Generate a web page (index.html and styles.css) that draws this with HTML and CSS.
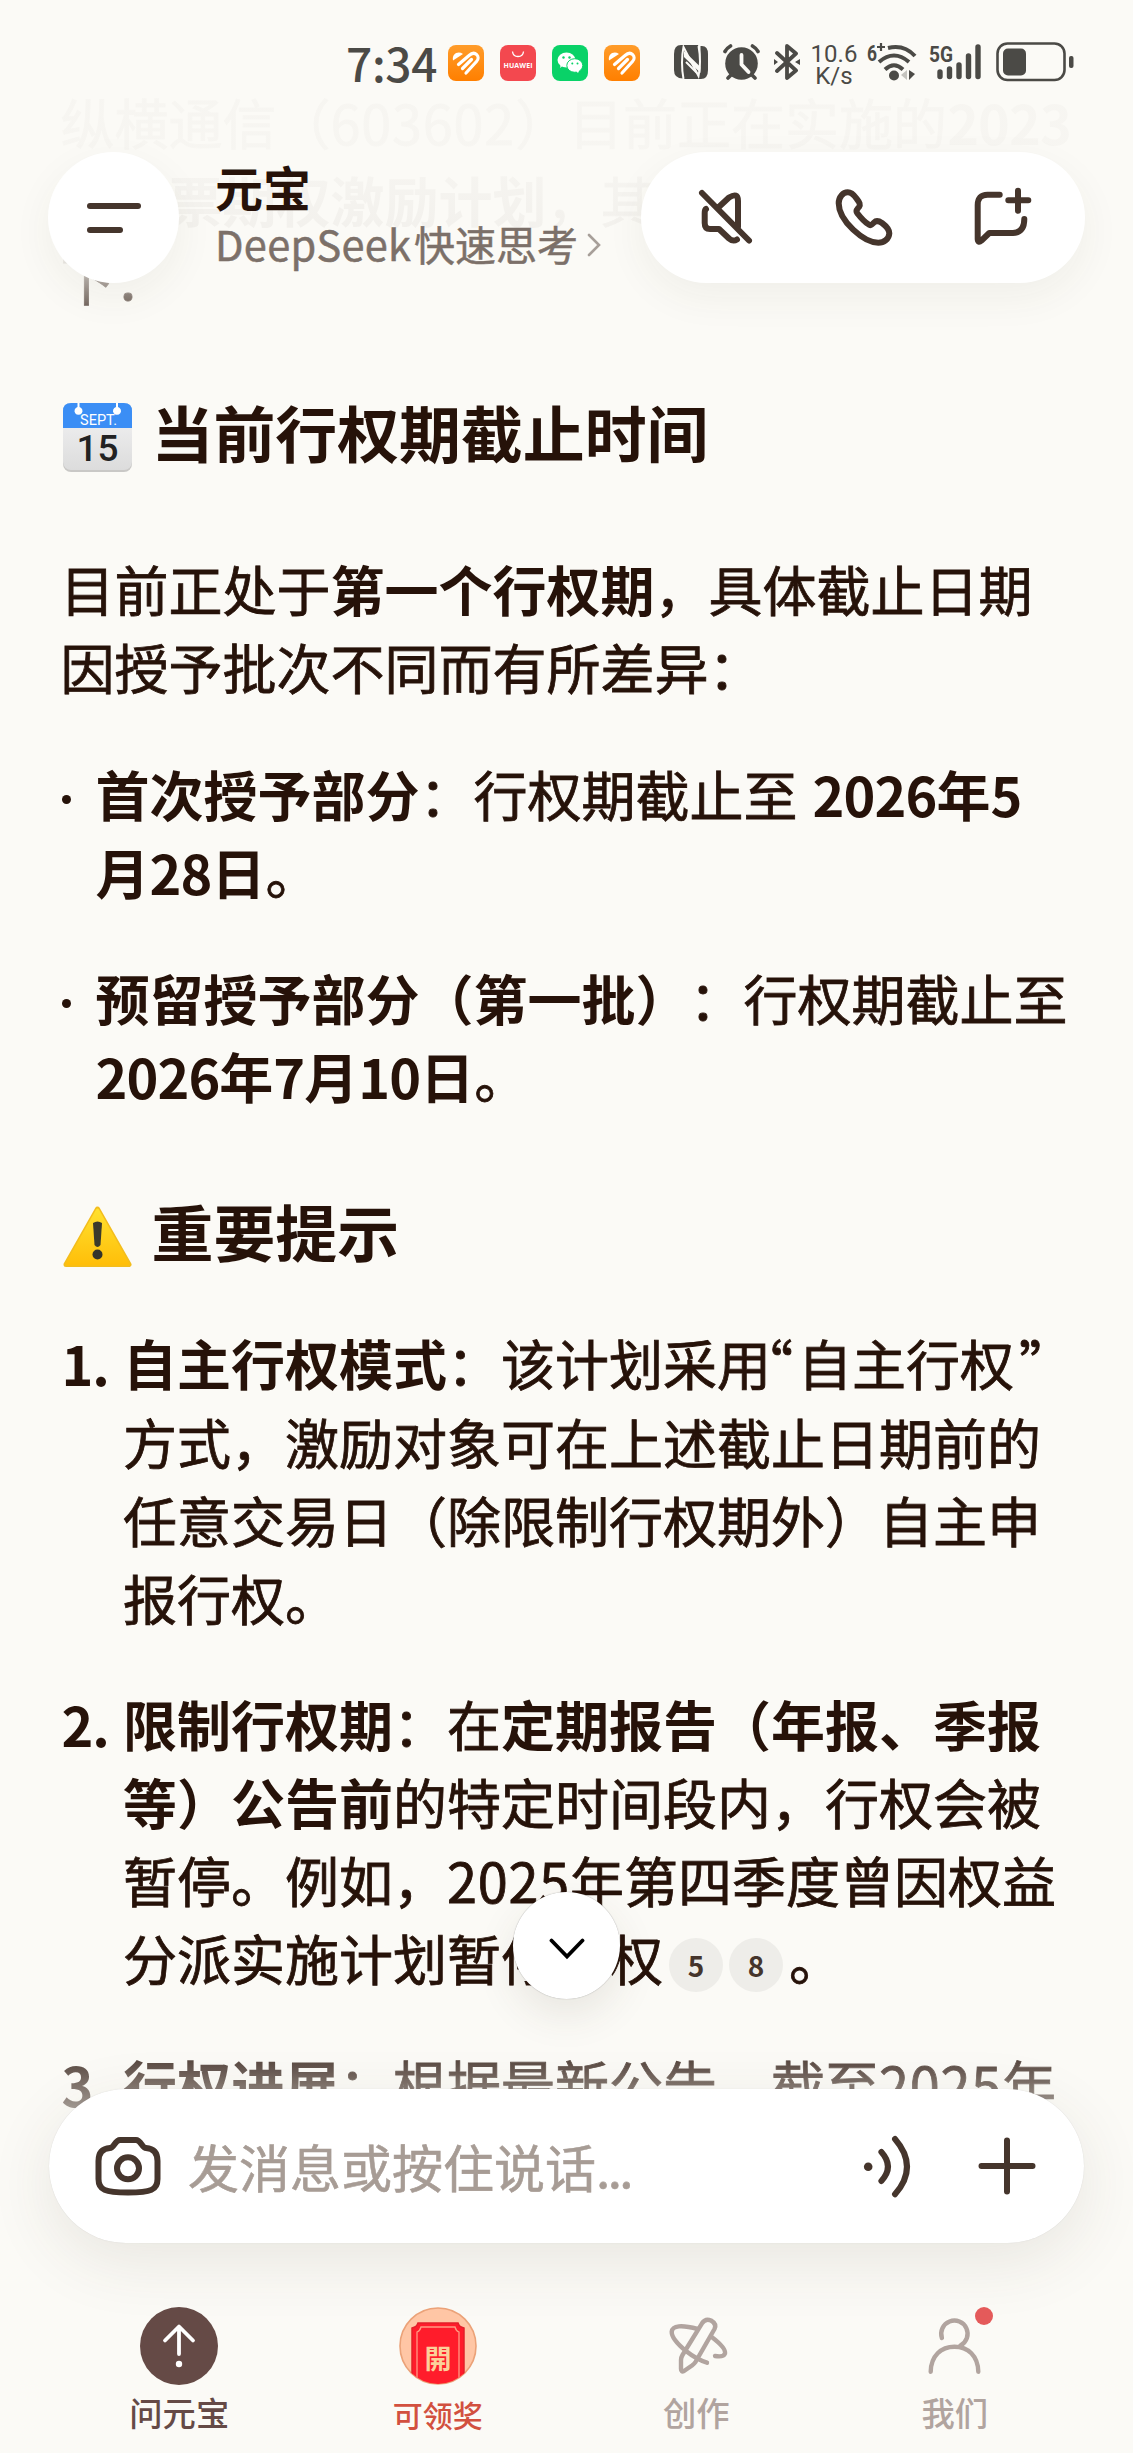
FILE: index.html
```html
<!DOCTYPE html>
<html lang="zh-CN">
<head>
    <meta charset="UTF-8">
    <meta name="viewport" content="width=device-width, initial-scale=1.0">
    <title>元宝</title>
    <link rel="stylesheet" href="styles.css">
</head>
<body>

<div class="screen">

    <!-- 对话内容 -->
    <main class="chat">
        <p class="intro">纵横通信（<span class="num">603602</span>）目前正在实施的<b class="num">2023</b><br><b>年股票期权激励计划</b>，其<br>下：</p>

        <h2>
            <svg class="emoji" viewBox="0 0 69 69">
                <defs>
                    <linearGradient id="paper" x1="0" y1="0" x2="0" y2="1">
                        <stop offset="0" stop-color="#f4f4f5"/>
                        <stop offset="1" stop-color="#dcdcdc"/>
                    </linearGradient>
                </defs>
                <rect width="69" height="69" rx="8" fill="#c9c8c6"/>
                <rect width="69" height="67" rx="8" fill="url(#paper)"/>
                <path d="M0 25V8Q0 0 8 0H61Q69 0 69 8V25Z" fill="#3b8ef5"/>
                <path d="M14.5 0H16.5V4A4 4 0 1 1 14.5 4ZM53 0H55V4A4 4 0 1 1 53 4Z" fill="#fff"/>
                <text x="35.5" y="22" class="cal-month">SEPT.</text>
                <text x="34.5" y="58" class="cal-day">15</text>
            </svg>
            <span>当前行权期截止时间</span>
        </h2>

        <p class="lead">目前正处于<b>第一个行权期</b>，具体截止日期<br>因授予批次不同而有所差异：</p>

        <ul>
            <li><span><b>首次授予部分</b>：行权期截止至 <b class="date"><span class="num">2026</span>年5</b><br><b>月<span class="num">28</span>日</b>。</span></li>
            <li><span><b>预留授予部分（第一批）</b>：行权期截止至<br><b><span class="num">2026</span>年<span class="num">7</span>月<span class="num">10</span>日</b>。</span></li>
        </ul>

        <h2 class="tips">
            <svg class="emoji warn" viewBox="0 0 69 62">
                <defs>
                    <linearGradient id="sign" x1="0" y1="0" x2="0" y2="1">
                        <stop offset="0" stop-color="#ffe02e"/>
                        <stop offset="1" stop-color="#ffbf0a"/>
                    </linearGradient>
                </defs>
                <path d="M34.5 3L66 58.5H3Z" fill="url(#sign)" stroke="#f3bd1c" stroke-width="5" stroke-linejoin="round"/>
                <path d="M34.5 4L65 58H4Z" fill="url(#sign)" stroke="url(#sign)" stroke-width="3" stroke-linejoin="round"/>
                <path d="M30 17Q34.5 14 39 17L37.5 39Q34.5 43 31.5 39Z" fill="#3a3a2c"/>
                <circle cx="34.5" cy="48.5" r="5" fill="#33332c"/>
            </svg>
            <span>重要提示</span>
        </h2>

        <ol>
            <li><b class="no">1.</b><span><b>自主行权模式</b>：该计划采用<i class="quote open-quote">“</i>自主行权<i class="quote close-quote">”</i><br>方式，激励对象可在上述截止日期前的<br>任意交易日（除限制行权期外）自主申<br>报行权。</span></li>
            <li><b class="no">2.</b><span><b>限制行权期</b>：在<b>定期报告（年报、季报</b><br><b>等）公告前</b>的特定时间段内，行权会被<br>暂停。例如，<span class="num">2025</span>年第四季度曾因权益<br>分派实施计划暂停行权<span class="ref">5</span><span class="ref">8</span><span class="stop">。</span></span></li>
            <li><b class="no">3.</b><span><b>行权进展</b>：根据最新公告，截至<span class="num">2025</span>年</span></li>
        </ol>
    </main>

    <!-- 顶部 -->
    <header class="top">
        <div class="status">
            <span class="time">7:34</span>
            <div class="apps">
                <svg viewBox="0 0 36 36">
                    <defs>
                        <linearGradient id="orange" x1="0" y1="0" x2="0" y2="1">
                            <stop offset="0" stop-color="#ff9c2a"/>
                            <stop offset="1" stop-color="#ff7f00"/>
                        </linearGradient>
                    </defs>
                    <rect width="36" height="36" rx="8" fill="url(#orange)"/>
                    <path d="M5 15.500C3.500 9 10 5.500 15 9Z" fill="#fff"/>
                    <path d="M10.500 19.500L21 10.500C27 5 33 11.500 28.500 16.500L18 28M14.500 23.500L23.500 14.500" fill="none" stroke="#fff" stroke-width="3.200" stroke-linecap="round"/>
                </svg>
                <svg viewBox="0 0 36 36">
                    <rect width="36" height="36" rx="8" fill="#f3484f"/>
                    <path d="M12.500 6.500Q13 11.500 18 11.500T23.500 6.500" fill="none" stroke="#fff" stroke-width="1.300"/>
                    <text x="18" y="23" class="brand" textLength="29">HUAWEI</text>
                </svg>
                <svg viewBox="0 0 36 36">
                    <rect width="36" height="36" rx="8" fill="#09d268"/>
                    <path d="M8 23L9 19H13Z" fill="#fff"/>
                    <ellipse cx="14.500" cy="15" rx="9" ry="7.500" fill="#fff"/>
                    <ellipse cx="22.800" cy="20.500" rx="8" ry="6.800" fill="#fff" stroke="#09d268"/>
                    <path d="M26 28L28 24L24 26Z" fill="#fff"/>
                    <g fill="#09d268">
                        <circle cx="11.500" cy="12.500" r="1.200"/><circle cx="17.500" cy="12.500" r="1.200"/>
                        <circle cx="20.300" cy="18.500" r="1"/><circle cx="25.500" cy="18.500" r="1"/>
                    </g>
                </svg>
                <svg viewBox="0 0 36 36">
                    <rect width="36" height="36" rx="8" fill="url(#orange)"/>
                    <path d="M5 15.500C3.500 9 10 5.500 15 9Z" fill="#fff"/>
                    <path d="M10.500 19.500L21 10.500C27 5 33 11.500 28.500 16.500L18 28M14.500 23.500L23.500 14.500" fill="none" stroke="#fff" stroke-width="3.200" stroke-linecap="round"/>
                </svg>
            </div>
            <div class="indicators">
                <!-- NFC -->
                <svg class="nfc" viewBox="0 0 34 34">
                    <path d="M7 0H24Q26 6 26.500 22L10 6V33.500Q0 34 0 25V9Q0 0 7 0Z" fill="#4b4a46"/>
                    <path d="M27 34H10L10 12L26.500 28V1Q34 0 34 9V25Q34 34 27 34Z" fill="#4b4a46"/>
                    <path d="M9.500 34Q6.500 17 9.500 2L24.500 31Q27.500 17 24.500 1" fill="none" stroke="#fbfaf6" stroke-width="2"/>
                    <path d="M12 10L23 21M12 17L23 28" stroke="#fbfaf6" stroke-width="2"/>
                </svg>
                <svg class="alarm" viewBox="0 0 37 36">
                    <circle cx="18.500" cy="19.500" r="16.300" fill="#4b4a46"/>
                    <path d="M2 7.500Q4 4 7.500 2M35 7.500Q33 4 29.500 2M5 34L9 30M32 34L28 30" stroke="#4b4a46" stroke-width="3.600" stroke-linecap="round" fill="none"/>
                    <path d="M18.500 11V20.500L25.500 28" stroke="#fbfaf6" stroke-width="3.800" stroke-linecap="round" stroke-linejoin="round" fill="none"/>
                </svg>
                <svg class="bt" viewBox="0 0 26 36">
                    <path d="M3 9L22 26.500L13 34V2L22 9.500L3 27" fill="none" stroke="#4b4a46" stroke-width="3.800" stroke-linecap="round" stroke-linejoin="round"/>
                    <path d="M0 15L4 18L0 21ZM26 15L21 18L26 21Z" fill="#4b4a46"/>
                </svg>
                <div class="speed"><span>10.6</span><span>K/s</span></div>
                <svg class="wifi" viewBox="0 0 50 40">
                    <text x="0" y="18.500" class="gen" textLength="10" lengthAdjust="spacingAndGlyphs">6</text>
                    <path d="M10 5H18M14 1V9" stroke="#4b4a46" stroke-width="2.200"/>
                    <g fill="none" stroke="#4b4a46" stroke-width="4" stroke-linecap="butt">
                        <path d="M21 6Q37 2 48 14M12 20Q27 7 42 20M18 27.500Q27 19 36 27.500"/>
                    </g>
                    <circle cx="27" cy="33.500" r="5" fill="#4b4a46"/>
                    <path d="M40 28V38L34 33Z" fill="#c4c3be"/>
                    <path d="M42 28V38L48 32Z" fill="#4b4a46"/>
                </svg>
                <svg class="signal" viewBox="0 0 54 38">
                    <text x="0" y="19" class="gen" textLength="24" lengthAdjust="spacingAndGlyphs">5G</text>
                    <path d="M11 29V33.500M20.500 26V33.500M30 22V33.500M39.500 13V33.500M49 4V33.500" stroke="#4b4a46" stroke-width="5.400" stroke-linecap="round"/>
                </svg>
                <svg class="battery" viewBox="0 0 78 40">
                    <rect x="1.500" y="1.500" width="67" height="36.500" rx="10" fill="none" stroke="#4b4a46" stroke-width="2.600"/>
                    <rect x="7" y="6.500" width="23" height="27" rx="5" fill="#4b4a46"/>
                    <rect x="73" y="14" width="4.500" height="12" rx="2" fill="#4b4a46"/>
                </svg>
            </div>
        </div>

        <div class="nav">
            <div class="menu"><i></i><i></i></div>
            <div class="title">
                <h1>元宝</h1>
                <p><span class="model">DeepSeek</span><span>快速思考</span>
                    <svg viewBox="0 0 14 24"><path d="M2 2L12 12L2 22" fill="none" stroke="#a79f99" stroke-width="2.600" stroke-linecap="round"/></svg>
                </p>
            </div>
            <div class="actions">
                <svg viewBox="0 0 60 60"><path d="M6 6L53 53.500M22 20.700L33 10.500Q42 5 42 14V40M10 22Q8.700 23 8.700 26V36Q8.700 42 14 42H23L33 51.500Q37 55 41 52.500"/></svg>
                <svg viewBox="0 0 60 60"><path d="M13.700 5.300C17 5.300 20 8 22.500 11.500C25 15 27 17 25 20C23 22.500 21 23.500 23.500 26.500C27 31 30 34.500 34 37C36.500 39.500 38 37.500 40 35.500C42 33.500 45 34 48 36C52 39 55.300 42 55.300 46.300C55 52 50 55.700 44.300 55.700C30 55.700 4.700 34 4.700 16.300C4.700 10 9 5.300 13.700 5.300Z"/></svg>
                <svg viewBox="0 0 60 60"><path d="M27.700 7.700H15.500Q5.700 7.700 5.700 18V52Q6 56.500 9.500 53.500L17.300 46H41Q52.300 45.500 52.300 32M46 3.700V23.700M36.300 13.300H56.300"/></svg>
            </div>
        </div>
    </header>

    <!-- 回到底部 -->
    <div class="scroll-down">
        <svg viewBox="0 0 36 22"><path d="M2.500 2.500L18 18.500L33.500 2.500" fill="none" stroke="#000" stroke-width="3.800" stroke-linecap="round"/></svg>
    </div>

    <!-- 底部 -->
    <footer class="bottom">
        <div class="composer">
            <svg class="camera" viewBox="0 0 66 59"><path d="M25 3H41C46 3 47 11 51 11C58 11.500 62.500 15 62.500 24V42C62.500 53 56 55.500 33 55.500S3.500 53 3.500 42V24C3.500 15 8 11.500 15 11C19 11 20 3 25 3Z"/><circle cx="33" cy="31.300" r="11"/></svg>
            <span class="placeholder">发消息或按住说话<span class="dots">...</span></span>
            <svg class="voice" viewBox="0 0 52 67"><circle class="dot" cx="8.200" cy="33.700" r="4.300"/><path d="M21.400 19Q34.500 33.700 21.400 48M35 6Q59 33.700 35 61.300"/></svg>
            <svg class="plus" viewBox="0 0 58 58"><path d="M29 3.500V54.500M3.500 29H54.500"/></svg>
        </div>

        <nav class="tabs">
            <div class="tab active">
                <svg viewBox="0 0 78 78">
                    <circle cx="39" cy="39" r="39" fill="#654a46"/>
                    <path d="M25 33.500L39 19.500L53 33.500M39 20V47" fill="none" stroke="#fff" stroke-width="3.800" stroke-linecap="round" stroke-linejoin="round"/>
                    <circle cx="39" cy="57" r="3.200" fill="#fff"/>
                </svg>
                <span>问元宝</span>
            </div>
            <div class="tab prize">
                <svg viewBox="0 0 78 78">
                    <defs><clipPath id="coin"><circle cx="39" cy="39" r="38"/></clipPath></defs>
                    <circle cx="39" cy="39" r="38" fill="#ffc6a5" stroke="#eba278" stroke-width="1.600"/>
                    <g clip-path="url(#coin)">
                        <path d="M19 16H59Q60 20 65 21V80H13V21Q18 20 19 16Z" fill="#ff1c2b" stroke="#e2202a" stroke-width="1.500"/>
                        <path d="M22 20H56Q57 24 60 25V78H18V25Q21 24 22 20Z" fill="none" stroke="#ff9a83" stroke-width="1.300"/>
                    </g>
                    <text x="39" y="62" class="open">開</text>
                </svg>
                <span>可领奖</span>
            </div>
            <div class="tab">
                <svg class="line" viewBox="-9 -7 78 78"><path d="M36 9.300Q39.500 4 45 6.500Q51 10 48.500 15L29.500 48Q28 50 26 51.500L18 57Q15 58.500 15 55V46Q15 43.500 16.500 41L36 9.300M31.700 15Q7 8.500 5.700 17.700Q5.500 25 20 37Q30 45 41 48.700M46 23.300Q60 34 59 39.500Q57.500 43.500 49 42"/></svg>
                <span>创作</span>
            </div>
            <div class="tab">
                <svg class="line" viewBox="-9 -7 78 78"><path d="M16.900 24A13.200 13.200 0 1 1 35.500 31.500M5.700 57.700C6 42 16 32.700 29.500 32.700S53 42 53.300 57.700"/></svg>
                <span>我们</span>
                <i class="badge"></i>
            </div>
        </nav>
    </footer>

</div>

</body>
</html>
```
FILE: styles.css
```css
/* 全局 */
* {
    box-sizing: border-box;
}

body {
    margin: 0;
    background-color: #fbfaf6;
    color: #261209;
    font-family: 'Noto Sans CJK SC', 'Noto Sans', sans-serif;
    text-spacing-trim: space-all;
}

h1, h2, p, ul, ol {
    margin: 0;
    padding: 0;
}

svg {
    display: block;
    flex: none;
}

.screen {
    position: relative;
    width: 1133px;
    height: 2453px;
    overflow: hidden;
}

/* 对话内容 */
.chat {
    padding: 83px 0 0 60.5px;
    font-size: 54px;
    line-height: 78.2px;
    white-space: nowrap;
    -webkit-text-stroke: 0.8px;
}

.chat b,
.chat h2 {
    -webkit-text-stroke: 0;
}

.num {
    letter-spacing: 0.8px;
}

b.num,
b .num {
    letter-spacing: -0.9px;
}

.date {
    margin-left: 3px;
}

.chat h2 {
    display: flex;
    gap: 20px;
    margin: 71px 0 77px 2px;
    font-size: 61.9px;
    line-height: 84px;
}

.emoji {
    width: 69px;
    height: 69px;
    margin-top: 14px;
}

.emoji.warn {
    height: 62px;
    margin-top: 18px;
}

.cal-month {
    font: 14.5px Roboto, sans-serif;
    fill: #fff;
    text-anchor: middle;
}

.cal-day {
    font: 500 37px Roboto, sans-serif;
    fill: #222;
    text-anchor: middle;
}

.chat ul {
    margin-top: 49px;
}

.chat li {
    display: flex;
    margin-bottom: 47.5px;
}

ul li::before {
    content: '';
    width: 9px;
    height: 9px;
    margin: 40px 25px 0 1px;
    border-radius: 50%;
    background-color: #261209;
}

.chat h2.tips {
    margin: 73px 0 52px 2px;
}

.no {
    width: 62.5px;
    padding-left: 1px;
    letter-spacing: -1px;
}

.quote {
    font-style: normal;
    font-feature-settings: 'halt';
}

.open-quote {
    margin: 0 5px 0 -5px;
}

.close-quote {
    margin-left: 5px;
}

.ref {
    display: inline-flex;
    align-items: center;
    justify-content: center;
    width: 54px;
    height: 54px;
    margin-left: 6px;
    border-radius: 50%;
    background-color: #eeede9;
    color: #45352c;
    font-size: 28px;
    font-weight: bold;
    line-height: 1;
    vertical-align: 4px;
    -webkit-text-stroke: 0;
}

.stop {
    margin-left: 6px;
}

/* 顶部 */
.top {
    position: absolute;
    top: 0;
    left: 0;
    width: 100%;
    height: 345px;
    background: linear-gradient(rgba(251, 250, 246, 0.98) 150px, rgba(251, 250, 246, 0.96) 230px, rgba(251, 250, 246, 0.92) 262px, rgba(251, 250, 246, 0.65) 280px, rgba(251, 250, 246, 0.4) 303px, rgba(251, 250, 246, 0) 340px);
}

.status {
    display: flex;
    height: 152px;
    padding: 45px 0 0 346px;
    color: #4b4a46;
}

.time {
    width: 102px;
    font-size: 46px;
    font-weight: 500;
    line-height: 35px;
    letter-spacing: -0.3px;
}

.apps {
    display: flex;
    gap: 16px;
}

.apps svg {
    width: 36px;
    height: 36px;
}

.brand {
    font: bold 7px 'Open Sans', sans-serif;
    fill: #fff;
    text-anchor: middle;
}

.indicators {
    display: flex;
    margin-left: 34px;
}

.nfc {
    width: 34px;
    height: 34px;
}

.alarm {
    width: 37px;
    height: 36px;
    margin: -1px 0 0 15px;
}

.bt {
    width: 26px;
    height: 36px;
    margin: -1px 0 0 14px;
}

.speed {
    display: flex;
    flex-direction: column;
    align-items: center;
    width: 52px;
    margin: -2px 0 0 8px;
    font-family: Roboto, sans-serif;
    font-size: 24px;
    line-height: 22px;
}

.wifi {
    width: 50px;
    height: 40px;
    margin: -3px 0 0 7px;
}

.signal {
    width: 54px;
    height: 38px;
    margin: -2px 0 0 12px;
}

.battery {
    width: 78px;
    height: 40px;
    margin: -3px 0 0 13px;
}

.gen {
    font: bold 22px Roboto, sans-serif;
    fill: #4b4a46;
}

.nav {
    display: flex;
    height: 131px;
    padding: 0 48px;
}

.menu {
    display: flex;
    flex-direction: column;
    gap: 18px;
    width: 131px;
    padding: 51px 0 0 39px;
    border-radius: 50%;
    background-color: #fff;
    box-shadow: 0 14px 40px rgba(70, 60, 40, 0.06);
}

.menu i {
    width: 54px;
    height: 6px;
    border-radius: 3px;
    background-color: #45352c;
}

.menu i + i {
    width: 36px;
}

.title {
    width: 462px;
    padding: 6px 0 0 36px;
}

.title h1 {
    font-size: 48px;
    line-height: 57px;
}

.title p {
    display: flex;
    align-items: center;
    color: #7c7069;
    font-size: 41px;
    line-height: 56px;
    -webkit-text-stroke: 0.5px;
}

.title .model {
    width: 199px;
    font-size: 41.5px;
    letter-spacing: 0.3px;
}

.title svg {
    width: 14px;
    height: 24px;
    margin: 4px 0 0 9px;
}

.actions {
    display: flex;
    flex: 1;
    gap: 78px;
    padding: 35px 0 0 55px;
    border-radius: 66px;
    background-color: #fff;
    box-shadow: 0 14px 40px rgba(70, 60, 40, 0.06);
}

.actions svg {
    width: 60px;
    height: 60px;
}

.actions svg,
.composer svg {
    fill: none;
    stroke: #45352c;
    stroke-width: 6;
    stroke-linecap: round;
    stroke-linejoin: round;
}

/* 回到底部 */
.scroll-down {
    position: absolute;
    top: 1892px;
    left: 513px;
    display: flex;
    align-items: center;
    justify-content: center;
    width: 107px;
    height: 107px;
    border-radius: 50%;
    background-color: #fff;
    box-shadow: 0 0 1px rgba(0, 0, 0, 0.4), 0 16px 40px rgba(70, 60, 40, 0.1);
}

.scroll-down svg {
    width: 36px;
    height: 22px;
    margin-top: 7px;
}

/* 底部 */
.bottom {
    position: absolute;
    bottom: 0;
    left: 0;
    width: 100%;
    height: 413px;
    padding: 49px 49px 0;
    background: linear-gradient(rgba(251, 250, 246, 0), rgba(251, 250, 246, 0.25) 22px, rgba(251, 250, 246, 0.6) 70px, #fbfaf6 140px);
}

.composer {
    display: flex;
    align-items: center;
    height: 154px;
    padding: 0 48px 0 46px;
    border-radius: 77px;
    background-color: #fff;
    box-shadow: 0 0 1px rgba(0, 0, 0, 0.15), 0 18px 64px rgba(70, 60, 40, 0.1);
}

.camera {
    width: 66px;
    height: 59px;
}

.placeholder {
    flex: 1;
    margin-left: 27px;
    color: #a79c95;
    font-size: 51px;
    line-height: 70px;
    -webkit-text-stroke: 0.6px;
}

.dots {
    letter-spacing: -2.5px;
}

.composer .voice {
    width: 52px;
    height: 67px;
}

.composer .dot {
    fill: #45352c;
    stroke: none;
}

.plus {
    width: 58px;
    height: 58px;
    margin-left: 66px;
}

.tabs {
    display: flex;
    padding: 64px 0 0 1px;
}

.tab {
    position: relative;
    display: flex;
    flex: 1;
    flex-direction: column;
    align-items: center;
    color: #b1a49f;
    font-size: 33.3px;
    font-weight: 500;
    line-height: 41px;
}

.tab svg {
    width: 78px;
    height: 78px;
    margin-bottom: 6px;
}

.tab .line {
    fill: none;
    stroke: #b1a49f;
    stroke-width: 4.4;
    stroke-linecap: round;
    stroke-linejoin: round;
}

.tab.active {
    color: #654a46;
}

.tab.prize {
    color: #d2503f;
    font-size: 30px;
    line-height: 46px;
}

.open {
    font: bold 27px 'Noto Sans CJK TC', serif;
    fill: #fbd09a;
    text-anchor: middle;
}

.badge {
    position: absolute;
    top: 0;
    left: 149px;
    width: 18px;
    height: 18px;
    border-radius: 50%;
    background-color: #e45a5a;
}
```
